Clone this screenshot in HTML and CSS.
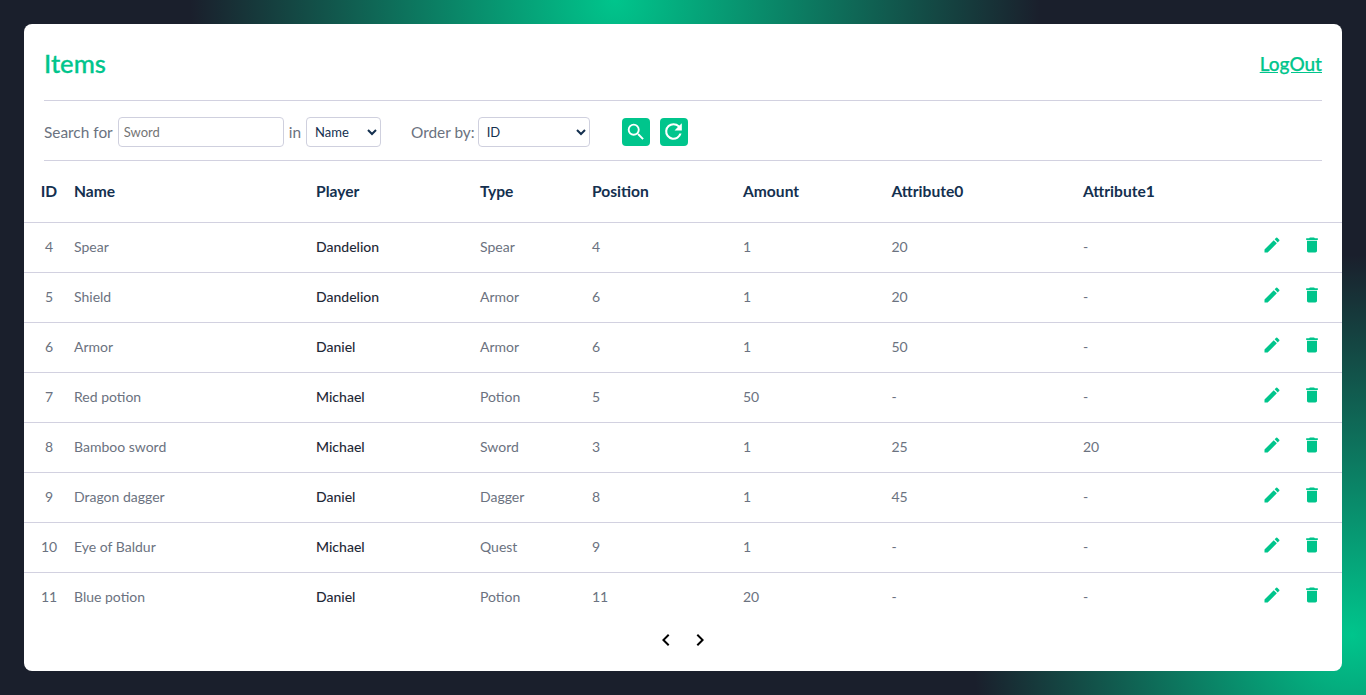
FILE: index.html
```html
<!DOCTYPE html>
<html lang="en">
<head>
<meta charset="utf-8">
<title>Items</title>
<link rel="stylesheet" href="styles.css">
</head>
<body>
<svg class="defs" width="0" height="0" aria-hidden="true">
  <symbol id="i-edit" viewBox="0 0 24 24"><path d="M3 17.25V21h3.75L17.81 9.94l-3.75-3.75L3 17.25zM20.71 7.04a1 1 0 0 0 0-1.41l-2.34-2.34a1 1 0 0 0-1.41 0l-1.83 1.83 3.75 3.75 1.83-1.83z"/></symbol>
  <symbol id="i-trash" viewBox="0 0 24 24"><path d="M6 19c0 1.1.9 2 2 2h8c1.1 0 2-.9 2-2V7H6v12zM19 4h-3.5l-1-1h-5l-1 1H5v2h14V4z"/></symbol>
</svg>
<main class="card">
  <header class="head">
    <h1 class="title">Items</h1>
    <a class="logout" href="#">LogOut</a>
  </header>
  <form class="filters">
    <label class="lbl" for="q">Search for</label>
    <input class="field field-q" id="q" placeholder="Sword">
    <span class="lbl">in</span>
    <select class="field field-in"><option>Name</option></select>
    <label class="lbl lbl-order" for="o">Order by:</label>
    <select class="field field-order" id="o"><option>ID</option></select>
    <button class="tool tool-first" type="button" aria-label="Search"><svg viewBox="0 0 24 24" class="tool-ic"><path d="M15.5 14h-.79l-.28-.27A6.47 6.47 0 0 0 16 9.5 6.5 6.5 0 1 0 9.5 16c1.61 0 3.09-.59 4.23-1.57l.27.28v.79l5 4.99L20.49 19l-4.99-5zm-6 0C7.01 14 5 11.99 5 9.5S7.01 5 9.5 5 14 7.01 14 9.5 11.99 14 9.5 14z"/></svg></button>
    <button class="tool" type="button" aria-label="Reset"><svg viewBox="0 0 24 24" class="tool-ic tool-ic-lg"><path d="M17.65 6.35A7.96 7.96 0 0 0 12 4a8 8 0 1 0 7.73 10h-2.08A6 6 0 1 1 12 6c1.66 0 3.14.69 4.22 1.78L13 11h7V4l-2.35 2.35z"/></svg></button>
  </form>
  <table class="grid">
    <colgroup>
      <col class="c-id"><col class="c-name"><col class="c-player"><col class="c-type"><col class="c-pos"><col class="c-amt"><col class="c-a0"><col class="c-a1"><col class="c-act">
    </colgroup>
    <thead>
      <tr><th class="center">ID</th><th>Name</th><th>Player</th><th>Type</th><th>Position</th><th>Amount</th><th>Attribute0</th><th>Attribute1</th><th></th></tr>
    </thead>
    <tbody>
      <tr><td class="center">4</td><td>Spear</td><td class="strong">Dandelion</td><td>Spear</td><td>4</td><td>1</td><td>20</td><td>-</td><td class="acts"><svg class="ic"><use href="#i-edit"/></svg><svg class="ic"><use href="#i-trash"/></svg></td></tr>
      <tr><td class="center">5</td><td>Shield</td><td class="strong">Dandelion</td><td>Armor</td><td>6</td><td>1</td><td>20</td><td>-</td><td class="acts"><svg class="ic"><use href="#i-edit"/></svg><svg class="ic"><use href="#i-trash"/></svg></td></tr>
      <tr><td class="center">6</td><td>Armor</td><td class="strong">Daniel</td><td>Armor</td><td>6</td><td>1</td><td>50</td><td>-</td><td class="acts"><svg class="ic"><use href="#i-edit"/></svg><svg class="ic"><use href="#i-trash"/></svg></td></tr>
      <tr><td class="center">7</td><td>Red potion</td><td class="strong">Michael</td><td>Potion</td><td>5</td><td>50</td><td>-</td><td>-</td><td class="acts"><svg class="ic"><use href="#i-edit"/></svg><svg class="ic"><use href="#i-trash"/></svg></td></tr>
      <tr><td class="center">8</td><td>Bamboo sword</td><td class="strong">Michael</td><td>Sword</td><td>3</td><td>1</td><td>25</td><td>20</td><td class="acts"><svg class="ic"><use href="#i-edit"/></svg><svg class="ic"><use href="#i-trash"/></svg></td></tr>
      <tr><td class="center">9</td><td>Dragon dagger</td><td class="strong">Daniel</td><td>Dagger</td><td>8</td><td>1</td><td>45</td><td>-</td><td class="acts"><svg class="ic"><use href="#i-edit"/></svg><svg class="ic"><use href="#i-trash"/></svg></td></tr>
      <tr><td class="center">10</td><td>Eye of Baldur</td><td class="strong">Michael</td><td>Quest</td><td>9</td><td>1</td><td>-</td><td>-</td><td class="acts"><svg class="ic"><use href="#i-edit"/></svg><svg class="ic"><use href="#i-trash"/></svg></td></tr>
      <tr><td class="center">11</td><td>Blue potion</td><td class="strong">Daniel</td><td>Potion</td><td>11</td><td>20</td><td>-</td><td>-</td><td class="acts"><svg class="ic"><use href="#i-edit"/></svg><svg class="ic"><use href="#i-trash"/></svg></td></tr>
    </tbody>
  </table>
  <nav class="pager">
    <svg class="chev" viewBox="0 0 24 24"><path d="M15.41 7.41 14 6l-6 6 6 6 1.41-1.41L10.83 12z"/></svg>
    <svg class="chev" viewBox="0 0 24 24"><path d="M10 6 8.59 7.41 13.17 12l-4.58 4.59L10 18l6-6z"/></svg>
  </nav>
</main>
</body>
</html>
```
FILE: styles.css
```css
* { box-sizing: border-box; }
html, body { height: 100%; }
body {
  margin: 0;
  padding: 24px;
  overflow: hidden;
  font-family: "Lato", "Liberation Sans", sans-serif;
  background-color: #1a1f2c;
  background-image:
    radial-gradient(circle 425px at 615px 0, #00c58c 0%, rgba(0,197,140,0) 100%),
    radial-gradient(circle 380px at 1352px 635px, #00c58c 0%, rgba(0,197,140,0) 100%);
  background-repeat: no-repeat;
}
.defs { position: absolute; }
.card {
  height: 647px;
  background: #fff;
  border-radius: 8px;
  overflow: hidden;
}
.head {
  margin: 0 20px;
  height: 77px;
  padding-top: 2px;
  display: flex;
  align-items: center;
  justify-content: space-between;
  border-bottom: 1px solid #d2d1e0;
}
.title {
  margin: 0;
  padding-top: 2px;
  font-size: 25.6px;
  font-weight: 500;
  color: #00c58c;
  line-height: 1;
  -webkit-text-stroke: .3px #00c58c;
}
.logout {
  font-size: 19px;
  font-weight: 500;
  color: #00c58c;
  text-decoration: underline;
  -webkit-text-stroke: .25px #00c58c;
}
.filters {
  margin: 0 20px;
  height: 60px;
  padding-top: 2px;
  display: flex;
  align-items: center;
  border-bottom: 1px solid #d2d1e0;
}
.lbl { font-size: 15.4px; color: #6b7280; }
.lbl-order { margin-left: 30px; }
.field {
  height: 30px;
  margin: 0 5px;
  border: 1px solid #cfd0de;
  border-radius: 4px;
  background: #fff;
  font-family: inherit;
  font-size: 13px;
  color: #14304f;
  padding: 0 4px;
}
.field::placeholder { color: #757575; }
.field-q { width: 166px; padding: 0 5px; }
.field-in { width: 75px; margin-right: 0; }
.field-order { width: 112px; margin-right: 0; margin-left: 3px; }
.tool {
  width: 28px;
  height: 28px;
  margin-left: 10px;
  padding: 0;
  border: 0;
  border-radius: 4px;
  background: #00c58c;
  display: flex;
  align-items: center;
  justify-content: center;
}
.tool-first { margin-left: 32px; }
.tool-ic { width: 22px; height: 22px; fill: #fff; }
.tool-ic-lg { width: 25px; height: 25px; }
.grid { width: 100%; border-collapse: collapse; table-layout: fixed; }
.c-id { width: 50px; }
.c-name { width: 242px; }
.c-player { width: 164px; }
.c-type { width: 112px; }
.c-pos { width: 151px; }
.c-amt { width: 148.5px; }
.c-a0 { width: 191.5px; }
.c-a1 { width: 169px; }
.grid th {
  height: 61px;
  padding: 0;
  text-align: left;
  font-size: 15.6px;
  font-weight: 700;
  color: #14304f;
  border-bottom: 1px solid #d2d1e0;
}
.grid td {
  height: 50px;
  padding: 0 0 2px;
  font-size: 14px;
  color: #6b7280;
  border-bottom: 1px solid #d2d1e0;
}
.grid tbody tr:last-child td { border-bottom: 0; }
.grid .center { text-align: center; }
.grid .strong { color: #1f2937; font-weight: 500; }
.grid .acts { white-space: nowrap; padding-bottom: 4px; }
.ic { width: 20px; height: 20px; fill: #00c58c; margin-left: 10px; margin-right: 10px; vertical-align: middle; }
.pager {
  display: flex;
  justify-content: center;
  align-items: center;
  gap: 10px;
  height: 36px;
}
.chev { width: 24px; height: 24px; fill: #000; }
```
